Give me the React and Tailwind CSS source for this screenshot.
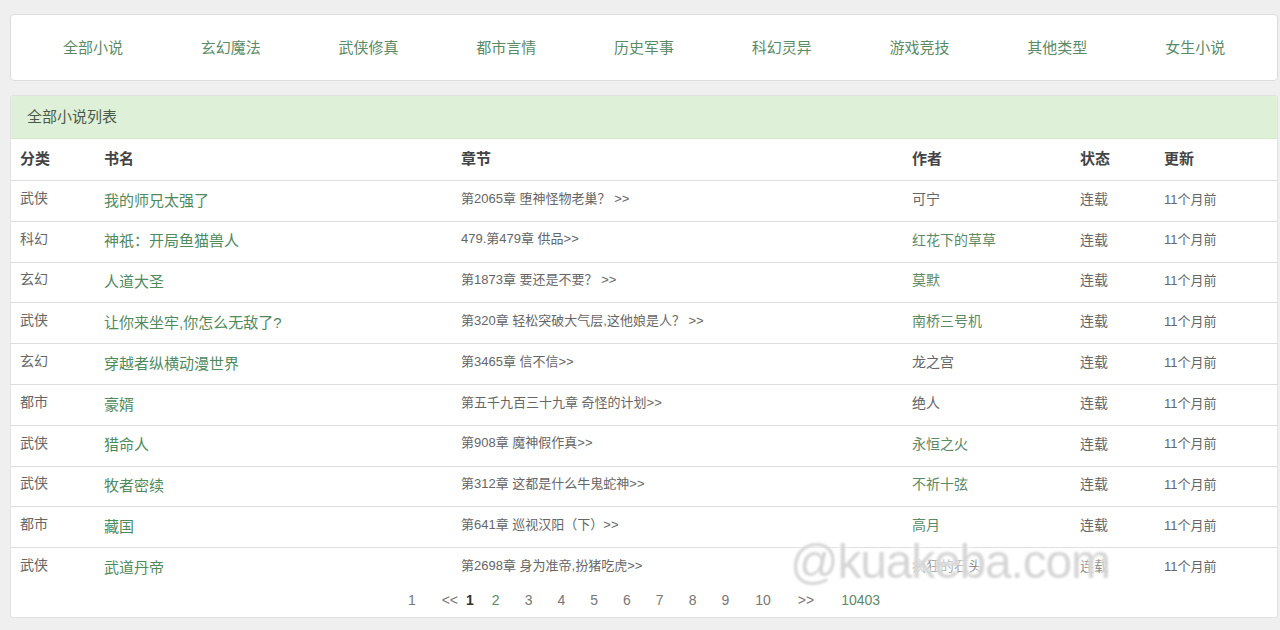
import React from "react";

const cats = ["全部小说", "玄幻魔法", "武侠修真", "都市言情", "历史军事", "科幻灵异", "游戏竞技", "其他类型", "女生小说"];

const rows = [
  { c: "武侠", t: "我的师兄太强了", ch: "第2065章 堕神怪物老巢？ >>", a: "可宁", ag: false },
  { c: "科幻", t: "神祇：开局鱼猫兽人", ch: "479.第479章 供品>>", a: "红花下的草草", ag: true },
  { c: "玄幻", t: "人道大圣", ch: "第1873章 要还是不要？ >>", a: "莫默", ag: true },
  { c: "武侠", t: "让你来坐牢,你怎么无敌了?", ch: "第320章 轻松突破大气层,这他娘是人？ >>", a: "南桥三号机", ag: true },
  { c: "玄幻", t: "穿越者纵横动漫世界", ch: "第3465章 信不信>>", a: "龙之宫", ag: false },
  { c: "都市", t: "豪婿", ch: "第五千九百三十九章 奇怪的计划>>", a: "绝人", ag: false },
  { c: "武侠", t: "猎命人", ch: "第908章 魔神假作真>>", a: "永恒之火", ag: true },
  { c: "武侠", t: "牧者密续", ch: "第312章 这都是什么牛鬼蛇神>>", a: "不祈十弦", ag: true },
  { c: "都市", t: "藏国", ch: "第641章 巡视汉阳（下）>>", a: "高月", ag: true },
  { c: "武侠", t: "武道丹帝", ch: "第2698章 身为准帝,扮猪吃虎>>", a: "疯狂的石头", ag: false },
];

const pages = [
  { t: "1", ml: "ml-0", cls: "text-[#777]" },
  { t: "<<", ml: "ml-[26px]", cls: "text-[#777]" },
  { t: "1", ml: "ml-[8px]", cls: "text-[#333] font-bold" },
  { t: "2", ml: "ml-[18px]", cls: "text-[#5b8a66]" },
  { t: "3", ml: "ml-[25px]", cls: "text-[#777]" },
  { t: "4", ml: "ml-[25px]", cls: "text-[#777]" },
  { t: "5", ml: "ml-[25px]", cls: "text-[#777]" },
  { t: "6", ml: "ml-[25px]", cls: "text-[#777]" },
  { t: "7", ml: "ml-[25px]", cls: "text-[#777]" },
  { t: "8", ml: "ml-[25px]", cls: "text-[#777]" },
  { t: "9", ml: "ml-[25px]", cls: "text-[#777]" },
  { t: "10", ml: "ml-[26px]", cls: "text-[#777]" },
  { t: ">>", ml: "ml-[27px]", cls: "text-[#777]" },
  { t: "10403", ml: "ml-[27px]", cls: "text-[#5b8a66]" },
];

export default function App() {
  return (
    <div className="relative w-[1280px] h-[630px] overflow-hidden bg-[#efefef] pt-[14px] font-['Liberation_Sans','Noto_Sans_CJK_SC',sans-serif]">
      {/* category nav */}
      <div className="ml-[10px] w-[1268px] h-[67px] bg-white border border-[#dcdcdc] rounded-[4px] flex items-center px-[13px] pt-[2px]">
        {cats.map(c => (
          <div key={c} className="w-[138px] text-center text-[15px] text-[#5b8a66]">{c}</div>
        ))}
      </div>

      {/* list panel */}
      <div className="ml-[10px] mt-[14px] w-[1268px] bg-white rounded-[3px] border border-[#e2e2e2]">
        <div className="h-[43px] bg-[#dff0d8] flex items-center pl-[16px] text-[15px] text-[#4b5a4b] border-b border-[#d6e9c6]">全部小说列表</div>

        <div className="flex h-[41px] items-center text-[15px] font-bold text-[#444]">
          <div className="w-[84px] pl-[9px]">分类</div>
          <div className="w-[357px] pl-[9px]">书名</div>
          <div className="w-[451px] pl-[9px]">章节</div>
          <div className="w-[168px] pl-[9px]">作者</div>
          <div className="w-[84px] pl-[9px]">状态</div>
          <div className="flex-1 pl-[9px]">更新</div>
        </div>

        {rows.map((r, i) => (
          <div key={i} className="flex h-[40.8px] items-center border-t border-[#dddddd] text-[#666]">
            <div className="w-[84px] pl-[9px] text-[14px] -mt-[5px]">{r.c}</div>
            <div className="w-[357px] pl-[9px] text-[15px] text-[#4f8a5d]">{r.t}</div>
            <div className="w-[451px] pl-[9px] text-[13px] -mt-[5px]">{r.ch}</div>
            <div className={"w-[168px] pl-[9px] text-[14px] -mt-[3px] " + (r.ag ? "text-[#5b8a66]" : "text-[#666]")}>{r.a}</div>
            <div className="w-[84px] pl-[9px] text-[14px] -mt-[3px]">连载</div>
            <div className="flex-1 pl-[9px] text-[13px] -mt-[3px]">11个月前</div>
          </div>
        ))}

        <div className="h-[29px] flex items-center justify-center text-[14px] pb-[4px]">
          {pages.map((p, i) => (
            <span key={i} className={p.ml + " " + p.cls}>{p.t}</span>
          ))}
        </div>
      </div>

      {/* watermark */}
      <div className="absolute left-[790px] top-[538px] text-[48px] leading-none tracking-[-1.2px] text-[#d6d6d6] blur-[0.8px] [text-shadow:0_0_4px_#fff,0_0_8px_#fff] pointer-events-none font-['Liberation_Sans',sans-serif]">@kuakeba.com</div>
    </div>
  );
}
